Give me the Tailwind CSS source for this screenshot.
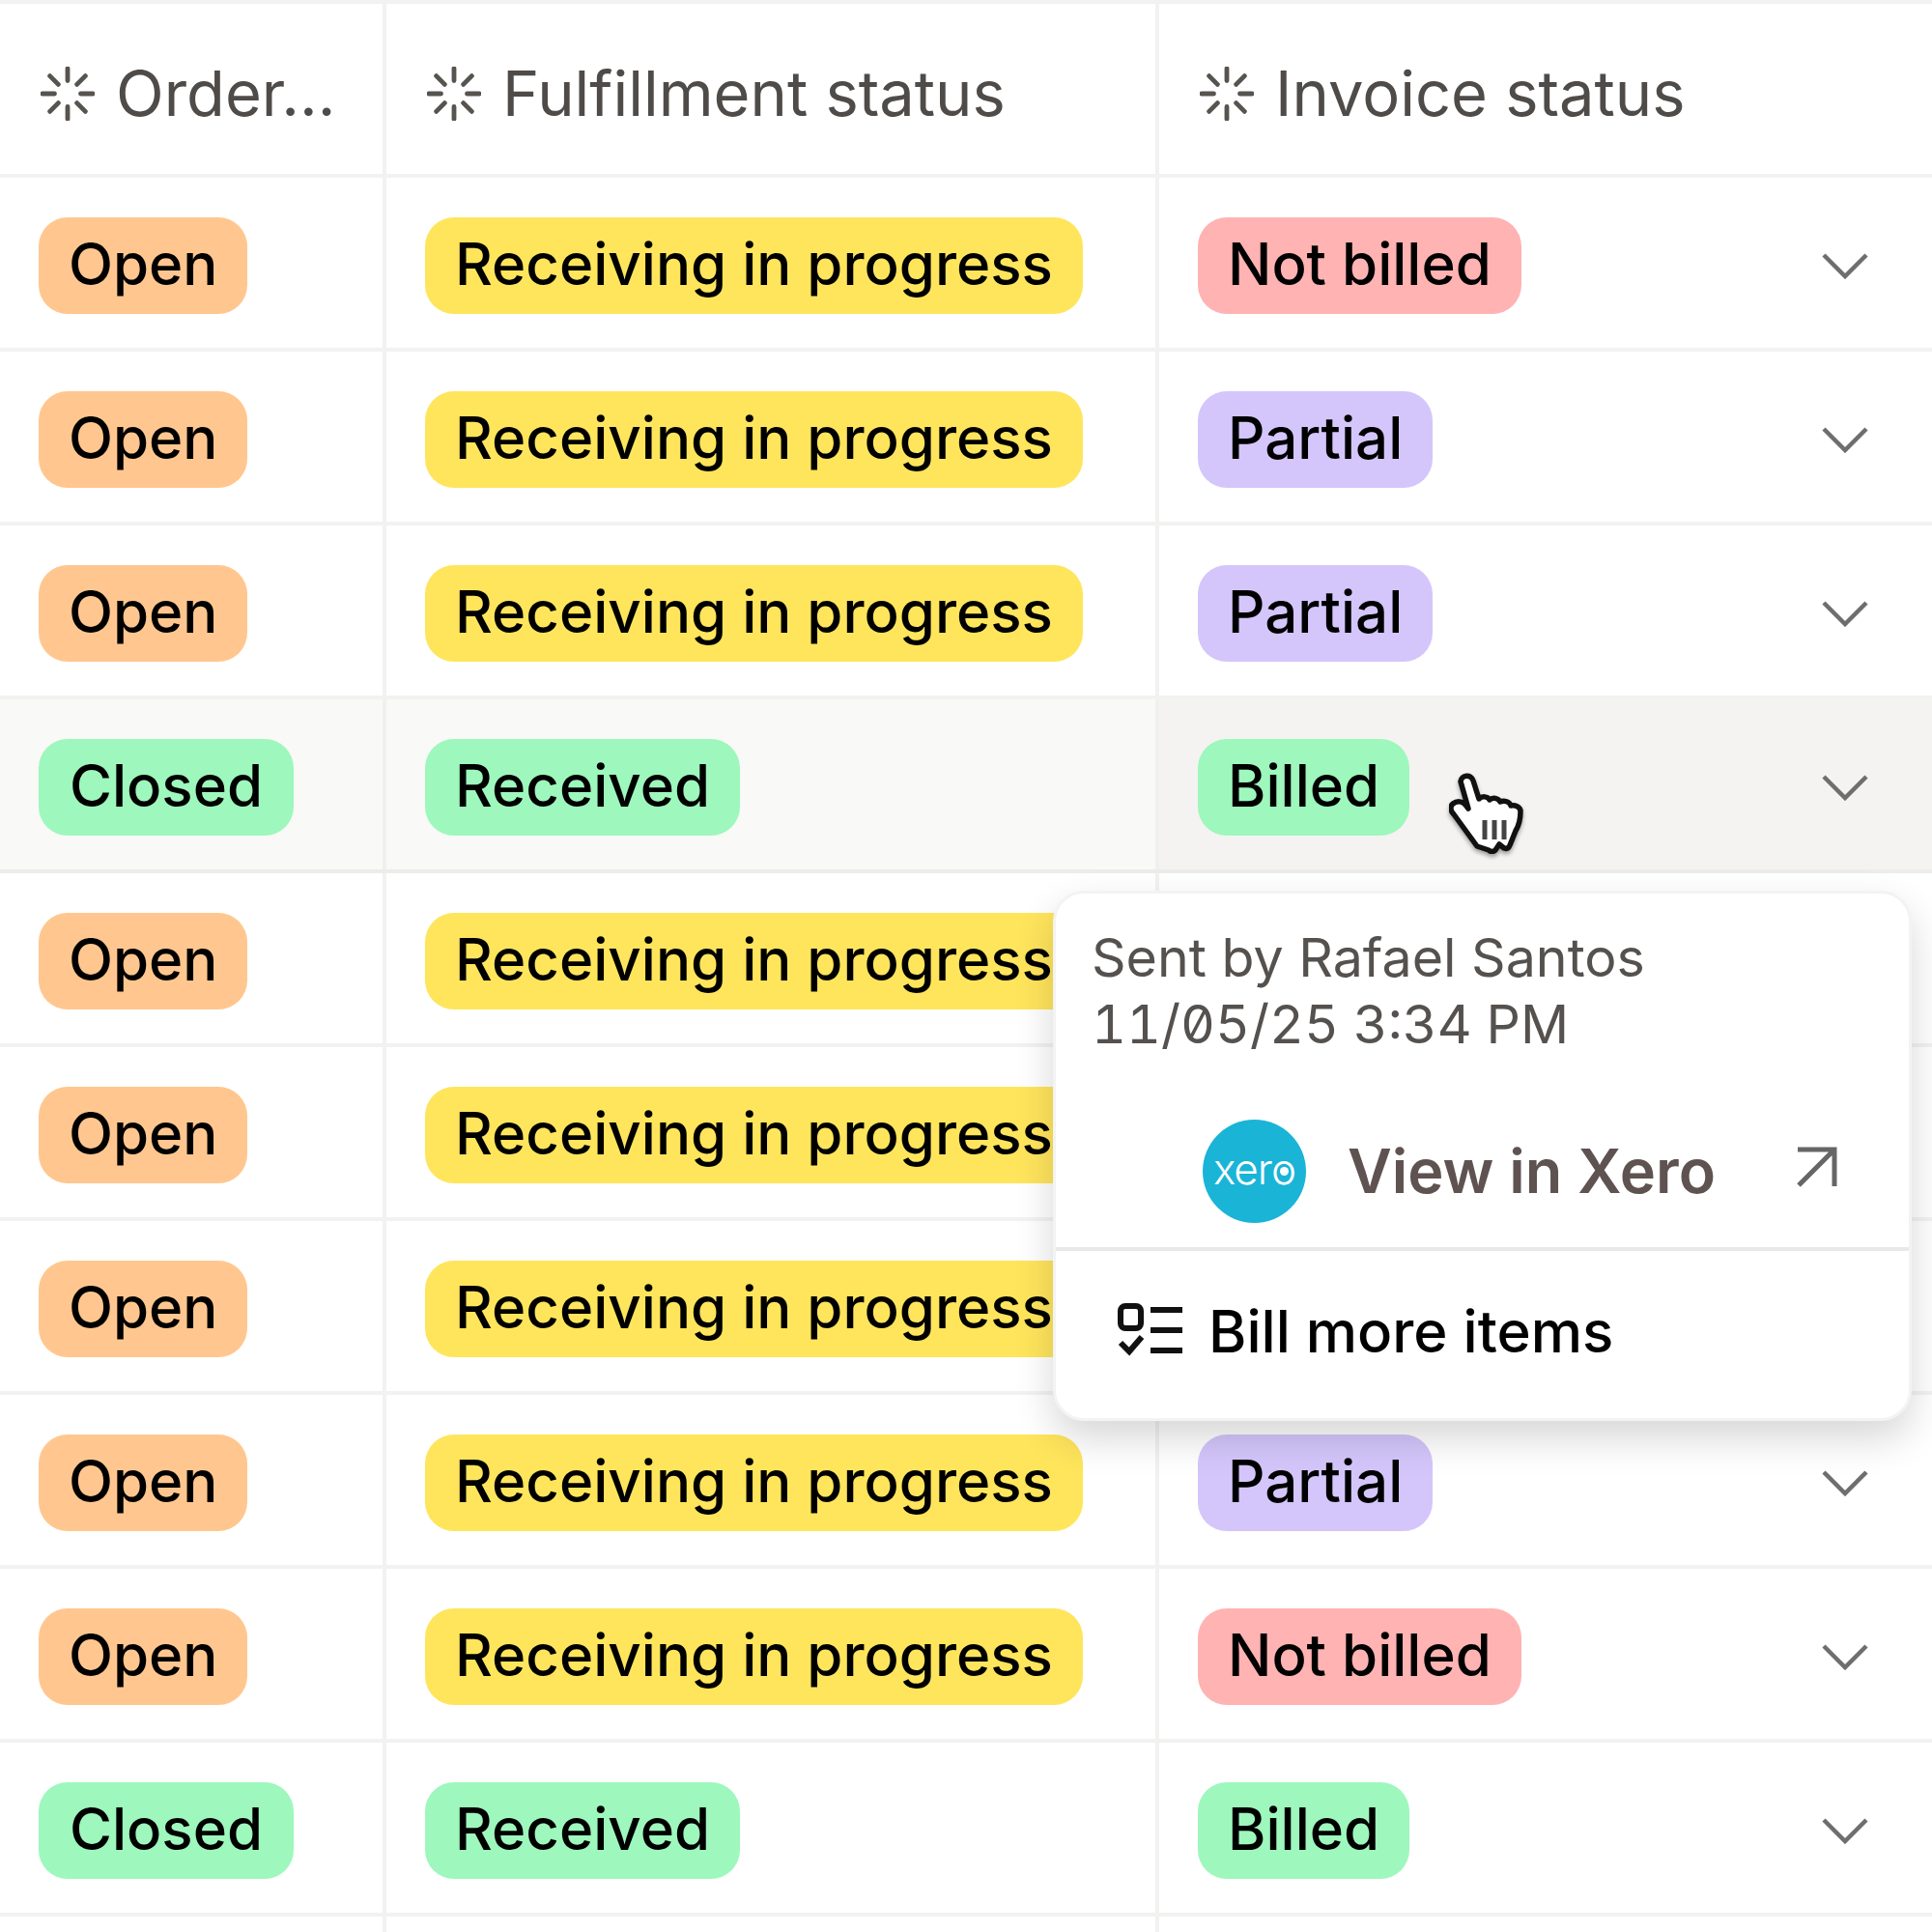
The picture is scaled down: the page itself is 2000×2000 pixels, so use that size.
<!DOCTYPE html>
<html lang="en">
  <head>
    <meta charset="UTF-8" />
    <title>Orders table</title>
    <script src="https://cdn.jsdelivr.net/npm/@tailwindcss/browser@4"></script>
  </head>
  <body class="bg-white font-['Inter','Liberation_Sans',sans-serif] text-black">
    <div class="relative w-[2000px] h-[2000px] overflow-hidden border-t-4 border-[#f2f2f1]">
      <!-- header -->
      <div class="grid grid-cols-[400px_800px_800px] h-[180px] border-b-4 border-[#f2f2f1] text-[#4f4b48] text-[65px]">
        <div class="flex items-center gap-[22px] pl-[42px] pt-[10px] border-r-4 border-[#f2f2f1]">
          <svg class="w-[56px] h-[56px] shrink-0" viewBox="0 0 58 58" fill="none" stroke="#57534f" stroke-width="5" stroke-linecap="round"><path d="M29 2v13M29 43v13M2 29h13M43 29h13M10 10l9 9M39 39l9 9M48 10l-9 9M19 39l-9 9"/></svg>
          <span>Order...</span>
        </div>
        <div class="flex items-center gap-[22px] pl-[42px] pt-[10px] border-r-4 border-[#f2f2f1]">
          <svg class="w-[56px] h-[56px] shrink-0" viewBox="0 0 58 58" fill="none" stroke="#57534f" stroke-width="5" stroke-linecap="round"><path d="M29 2v13M29 43v13M2 29h13M43 29h13M10 10l9 9M39 39l9 9M48 10l-9 9M19 39l-9 9"/></svg>
          <span>Fulfillment status</span>
        </div>
        <div class="flex items-center gap-[22px] pl-[42px] pt-[10px]">
          <svg class="w-[56px] h-[56px] shrink-0" viewBox="0 0 58 58" fill="none" stroke="#57534f" stroke-width="5" stroke-linecap="round"><path d="M29 2v13M29 43v13M2 29h13M43 29h13M10 10l9 9M39 39l9 9M48 10l-9 9M19 39l-9 9"/></svg>
          <span>Invoice status</span>
        </div>
      </div>

      <!-- row 1 -->
      <div class="grid grid-cols-[400px_800px_800px] h-[180px] border-b-4 border-[#f2f2f1] text-[60px] font-medium">
        <div class="flex items-center pt-[6px] pl-[40px] border-r-4 border-[#f2f2f1]"><span class="h-[100px] flex items-center px-[31px] pb-[4px] rounded-[30px] bg-[#ffc78f]">Open</span></div>
        <div class="flex items-center pt-[6px] pl-[40px] border-r-4 border-[#f2f2f1]"><span class="h-[100px] flex items-center px-[31px] pb-[4px] rounded-[30px] bg-[#ffe55c]">Receiving in progress</span></div>
        <div class="flex items-center justify-between pt-[6px] pl-[40px] pr-[66px]"><span class="h-[100px] flex items-center px-[31px] pb-[4px] rounded-[30px] bg-[#ffb3b3]">Not billed</span><svg class="w-[48px] h-[28px]" viewBox="0 0 48 28" fill="none" stroke="#6e6e6e" stroke-width="4.5"><path d="M2 3l22 22L46 3"/></svg></div>
      </div>
      <!-- row 2 -->
      <div class="grid grid-cols-[400px_800px_800px] h-[180px] border-b-4 border-[#f2f2f1] text-[60px] font-medium">
        <div class="flex items-center pt-[6px] pl-[40px] border-r-4 border-[#f2f2f1]"><span class="h-[100px] flex items-center px-[31px] pb-[4px] rounded-[30px] bg-[#ffc78f]">Open</span></div>
        <div class="flex items-center pt-[6px] pl-[40px] border-r-4 border-[#f2f2f1]"><span class="h-[100px] flex items-center px-[31px] pb-[4px] rounded-[30px] bg-[#ffe55c]">Receiving in progress</span></div>
        <div class="flex items-center justify-between pt-[6px] pl-[40px] pr-[66px]"><span class="h-[100px] flex items-center px-[31px] pb-[4px] rounded-[30px] bg-[#d4c6fb]">Partial</span><svg class="w-[48px] h-[28px]" viewBox="0 0 48 28" fill="none" stroke="#6e6e6e" stroke-width="4.5"><path d="M2 3l22 22L46 3"/></svg></div>
      </div>
      <!-- row 3 -->
      <div class="grid grid-cols-[400px_800px_800px] h-[180px] border-b-4 border-[#f2f2f1] text-[60px] font-medium">
        <div class="flex items-center pt-[6px] pl-[40px] border-r-4 border-[#f2f2f1]"><span class="h-[100px] flex items-center px-[31px] pb-[4px] rounded-[30px] bg-[#ffc78f]">Open</span></div>
        <div class="flex items-center pt-[6px] pl-[40px] border-r-4 border-[#f2f2f1]"><span class="h-[100px] flex items-center px-[31px] pb-[4px] rounded-[30px] bg-[#ffe55c]">Receiving in progress</span></div>
        <div class="flex items-center justify-between pt-[6px] pl-[40px] pr-[66px]"><span class="h-[100px] flex items-center px-[31px] pb-[4px] rounded-[30px] bg-[#d4c6fb]">Partial</span><svg class="w-[48px] h-[28px]" viewBox="0 0 48 28" fill="none" stroke="#6e6e6e" stroke-width="4.5"><path d="M2 3l22 22L46 3"/></svg></div>
      </div>
      <!-- row 4, hovered -->
      <div class="grid grid-cols-[400px_800px_800px] h-[180px] border-b-4 border-[#ececea] text-[60px] font-medium bg-[#f9f9f7]">
        <div class="flex items-center pt-[6px] pl-[40px] border-r-4 border-[#f0f0ee]"><span class="h-[100px] flex items-center px-[32px] pb-[4px] rounded-[30px] bg-[#9ef7bc]">Closed</span></div>
        <div class="flex items-center pt-[6px] pl-[40px] border-r-4 border-[#f0f0ee]"><span class="h-[100px] flex items-center px-[31px] pb-[4px] rounded-[30px] bg-[#9ef7bc]">Received</span></div>
        <div class="flex items-center justify-between pt-[6px] pl-[40px] pr-[66px] bg-[#f4f3f1]"><span class="h-[100px] flex items-center px-[31px] pb-[4px] rounded-[30px] bg-[#9ef7bc]">Billed</span><svg class="w-[48px] h-[28px]" viewBox="0 0 48 28" fill="none" stroke="#6e6e6e" stroke-width="4.5"><path d="M2 3l22 22L46 3"/></svg></div>
      </div>
      <!-- rows 5-7 sit behind the popover -->
      <div class="grid grid-cols-[400px_800px_800px] h-[180px] border-b-4 border-[#f2f2f1] text-[60px] font-medium">
        <div class="flex items-center pt-[6px] pl-[40px] border-r-4 border-[#f2f2f1]"><span class="h-[100px] flex items-center px-[31px] pb-[4px] rounded-[30px] bg-[#ffc78f]">Open</span></div>
        <div class="flex items-center pt-[6px] pl-[40px] border-r-4 border-[#f2f2f1]"><span class="h-[100px] flex items-center px-[31px] pb-[4px] rounded-[30px] bg-[#ffe55c]">Receiving in progress</span></div>
        <div></div>
      </div>
      <div class="grid grid-cols-[400px_800px_800px] h-[180px] border-b-4 border-[#f2f2f1] text-[60px] font-medium">
        <div class="flex items-center pt-[6px] pl-[40px] border-r-4 border-[#f2f2f1]"><span class="h-[100px] flex items-center px-[31px] pb-[4px] rounded-[30px] bg-[#ffc78f]">Open</span></div>
        <div class="flex items-center pt-[6px] pl-[40px] border-r-4 border-[#f2f2f1]"><span class="h-[100px] flex items-center px-[31px] pb-[4px] rounded-[30px] bg-[#ffe55c]">Receiving in progress</span></div>
        <div></div>
      </div>
      <div class="grid grid-cols-[400px_800px_800px] h-[180px] border-b-4 border-[#f2f2f1] text-[60px] font-medium">
        <div class="flex items-center pt-[6px] pl-[40px] border-r-4 border-[#f2f2f1]"><span class="h-[100px] flex items-center px-[31px] pb-[4px] rounded-[30px] bg-[#ffc78f]">Open</span></div>
        <div class="flex items-center pt-[6px] pl-[40px] border-r-4 border-[#f2f2f1]"><span class="h-[100px] flex items-center px-[31px] pb-[4px] rounded-[30px] bg-[#ffe55c]">Receiving in progress</span></div>
        <div></div>
      </div>
      <!-- row 8 -->
      <div class="grid grid-cols-[400px_800px_800px] h-[180px] border-b-4 border-[#f2f2f1] text-[60px] font-medium">
        <div class="flex items-center pt-[6px] pl-[40px] border-r-4 border-[#f2f2f1]"><span class="h-[100px] flex items-center px-[31px] pb-[4px] rounded-[30px] bg-[#ffc78f]">Open</span></div>
        <div class="flex items-center pt-[6px] pl-[40px] border-r-4 border-[#f2f2f1]"><span class="h-[100px] flex items-center px-[31px] pb-[4px] rounded-[30px] bg-[#ffe55c]">Receiving in progress</span></div>
        <div class="flex items-center justify-between pt-[6px] pl-[40px] pr-[66px]"><span class="h-[100px] flex items-center px-[31px] pb-[4px] rounded-[30px] bg-[#d4c6fb]">Partial</span><svg class="w-[48px] h-[28px]" viewBox="0 0 48 28" fill="none" stroke="#6e6e6e" stroke-width="4.5"><path d="M2 3l22 22L46 3"/></svg></div>
      </div>
      <!-- row 9 -->
      <div class="grid grid-cols-[400px_800px_800px] h-[180px] border-b-4 border-[#f2f2f1] text-[60px] font-medium">
        <div class="flex items-center pt-[6px] pl-[40px] border-r-4 border-[#f2f2f1]"><span class="h-[100px] flex items-center px-[31px] pb-[4px] rounded-[30px] bg-[#ffc78f]">Open</span></div>
        <div class="flex items-center pt-[6px] pl-[40px] border-r-4 border-[#f2f2f1]"><span class="h-[100px] flex items-center px-[31px] pb-[4px] rounded-[30px] bg-[#ffe55c]">Receiving in progress</span></div>
        <div class="flex items-center justify-between pt-[6px] pl-[40px] pr-[66px]"><span class="h-[100px] flex items-center px-[31px] pb-[4px] rounded-[30px] bg-[#ffb3b3]">Not billed</span><svg class="w-[48px] h-[28px]" viewBox="0 0 48 28" fill="none" stroke="#6e6e6e" stroke-width="4.5"><path d="M2 3l22 22L46 3"/></svg></div>
      </div>
      <!-- row 10 -->
      <div class="grid grid-cols-[400px_800px_800px] h-[180px] border-b-4 border-[#f2f2f1] text-[60px] font-medium">
        <div class="flex items-center pt-[6px] pl-[40px] border-r-4 border-[#f2f2f1]"><span class="h-[100px] flex items-center px-[32px] pb-[4px] rounded-[30px] bg-[#9ef7bc]">Closed</span></div>
        <div class="flex items-center pt-[6px] pl-[40px] border-r-4 border-[#f2f2f1]"><span class="h-[100px] flex items-center px-[31px] pb-[4px] rounded-[30px] bg-[#9ef7bc]">Received</span></div>
        <div class="flex items-center justify-between pt-[6px] pl-[40px] pr-[66px]"><span class="h-[100px] flex items-center px-[31px] pb-[4px] rounded-[30px] bg-[#9ef7bc]">Billed</span><svg class="w-[48px] h-[28px]" viewBox="0 0 48 28" fill="none" stroke="#6e6e6e" stroke-width="4.5"><path d="M2 3l22 22L46 3"/></svg></div>
      </div>
      <div class="grid grid-cols-[400px_800px_800px] h-[20px]">
        <div class="border-r-4 border-[#f2f2f1]"></div>
        <div class="border-r-4 border-[#f2f2f1]"></div>
        <div></div>
      </div>

      <!-- hand cursor -->
      <svg class="absolute left-[1500px] top-[796px] w-[78px] h-[84px] drop-shadow-[0_3px_2px_rgba(0,0,0,0.35)]" viewBox="0 0 78 84">
        <path d="M12 9c1-7 11-8 13-1l6 19c3-3 9-3 11 1 3-3 9-2 11 2 4-2 10 0 11 4 4-1 10 1 10 6 0 8-2 15-5 20l-6 15c-1 3-3 4-6 3l-5-4-4 6c-2 2-5 2-7 0l-12-4L5 43c-4-4-4-8-1-11 4-3 9-3 13 1l3 4z" fill="#fff" stroke="#111" stroke-width="5.5" stroke-linejoin="round"/>
        <path d="M37 49v20M47 49v20M57 49v20" stroke="#444" stroke-width="5" fill="none"/>
      </svg>

      <!-- popover -->
      <div class="absolute left-[1090px] top-[918px] w-[889px] h-[549px] bg-white rounded-[32px] border-[3px] border-[#f3f3f2] shadow-[0_18px_40px_rgba(0,0,0,0.16)] flex flex-col">
        <div class="h-[370px] border-b-4 border-[#e8e8e7] flex flex-col">
          <div class="pl-[37px] pt-[31px] text-[55.5px] leading-[69px] text-[#55514e]">
            <div>Sent by Rafael Santos</div>
            <div class="[font-feature-settings:'zero','tnum']">11/05/25 3:34 PM</div>
          </div>
          <div class="flex items-center pl-[152px] pt-[65px]">
            <div class="relative w-[107px] h-[107px] rounded-full bg-[#1ab4d7] flex items-center justify-center shrink-0">
              <span class="text-white text-[44px] font-light tracking-[-1px] leading-none pb-[6px]">xero</span>
              <span class="absolute left-[80px] top-[49px] w-[9px] h-[9px] rounded-full bg-white"></span>
            </div>
            <span class="ml-[43px] text-[63px] font-semibold text-[#5f5352]">View in Xero</span>
            <svg class="ml-[82px] w-[44px] h-[44px] mb-[10px]" viewBox="0 0 44 44" fill="none" stroke="#666" stroke-width="5"><path d="M3 4h38v38M41 4L4 41"/></svg>
          </div>
        </div>
        <div class="flex items-center pl-[64px] pt-[12px] flex-1 pb-[20px]">
          <svg class="w-[68px] h-[58px] shrink-0" viewBox="0 0 68 58" fill="none" stroke="#111" stroke-width="6"><rect x="3" y="3" width="21" height="23" rx="5"/><path d="M3 41l9 9 13-15M34 7h33M34 28h33M34 49h33"/></svg>
          <span class="ml-[26px] text-[60px] font-medium">Bill more items</span>
        </div>
      </div>
    </div>
  </body>
</html>
